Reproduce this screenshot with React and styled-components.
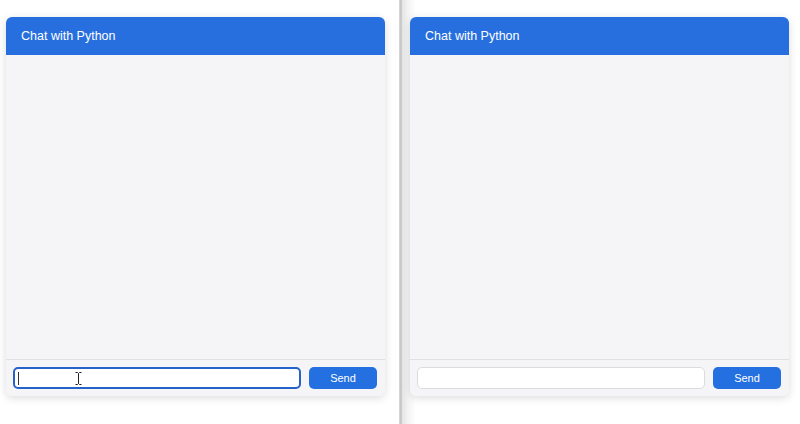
import React from 'react'
import styled, { createGlobalStyle } from 'styled-components'

const Global = createGlobalStyle`
  html, body { margin: 0; padding: 0; background: #ffffff; }
  body { font-family: "Liberation Sans", Arial, sans-serif; }
`

const Page = styled.div`
  display: flex;
  width: 800px;
  height: 424px;
  overflow: hidden;
`

const Pane = styled.div`
  flex: ${(props) => (props.side === 'left' ? '0 0 399px' : '1')};
  padding: 17px 0 0 ${(props) => (props.side === 'left' ? '6px' : '8px')};
  box-sizing: border-box;
  background: ${(props) =>
    props.side === 'left'
      ? '#ffffff'
      : 'linear-gradient(to right, #e4e4e4 0px, #f3f3f3 6px, #ffffff 14px)'};
`

const Divider = styled.div`
  flex: 0 0 3px;
  background: linear-gradient(to right, #dadada, #c4c4c4 60%, #d2d2d2);
`

const Card = styled.div`
  width: 379px;
  height: 379px;
  display: flex;
  flex-direction: column;
  border-radius: 6px;
  overflow: hidden;
  background: #f5f5f7;
  box-shadow: 0 2px 8px rgba(0, 0, 0, 0.14);
`

const Header = styled.div`
  height: 38px;
  flex: 0 0 38px;
  display: flex;
  align-items: center;
  padding-left: 15px;
  background: #276fdf;
  color: #ffffff;
  font-size: 12.5px;
`

const Messages = styled.div`
  flex: 1;
  background: #f5f5f7;
`

const Footer = styled.div`
  flex: 0 0 36px;
  display: flex;
  align-items: center;
  gap: 8px;
  padding: 0 8px 0 7px;
  border-top: 1px solid #e0e0e2;
  background: #f5f5f7;
`

const InputWrap = styled.div`
  position: relative;
  flex: 1;
  display: flex;
  align-items: center;
`

const Input = styled.div`
  flex: 1;
  height: 22px;
  box-sizing: border-box;
  border-radius: 5px;
  border: ${(props) => (props.$focused ? '2px solid #2562c9' : '1px solid #dcdcdc')};
  background: #ffffff;
  display: flex;
  align-items: center;
  padding-left: 3px;
`

const Caret = styled.span`
  width: 1px;
  height: 13px;
  background: #333;
`

const Pointer = styled.svg`
  position: absolute;
  left: 62px;
  top: 5px;
  pointer-events: none;
`

const SendButton = styled.button`
  flex: 0 0 68px;
  height: 22px;
  border: none;
  border-radius: 5px;
  background: #2570e0;
  color: #ffffff;
  font-size: 11px;
  font-family: inherit;
  padding: 0;
`

function Chat({ focused }) {
  return (
    <Card>
      <Header>Chat with Python</Header>
      <Messages />
      <Footer>
        <InputWrap>
          <Input $focused={focused}>{focused && <Caret />}</Input>
          {focused && (
            <Pointer width="7" height="13" viewBox="0 0 7 13">
              <path
                d="M0.5 0.5 H2.5 L3.5 1.5 L4.5 0.5 H6.5 M3.5 1.5 V11.5 M0.5 12.5 H2.5 L3.5 11.5 L4.5 12.5 H6.5"
                fill="none"
                stroke="#222"
                strokeWidth="1"
              />
            </Pointer>
          )}
        </InputWrap>
        <SendButton>Send</SendButton>
      </Footer>
    </Card>
  )
}

export default function App() {
  return (
    <>
      <Global />
      <Page>
        <Pane side="left">
          <Chat focused />
        </Pane>
        <Divider />
        <Pane side="right">
          <Chat />
        </Pane>
      </Page>
    </>
  )
}
